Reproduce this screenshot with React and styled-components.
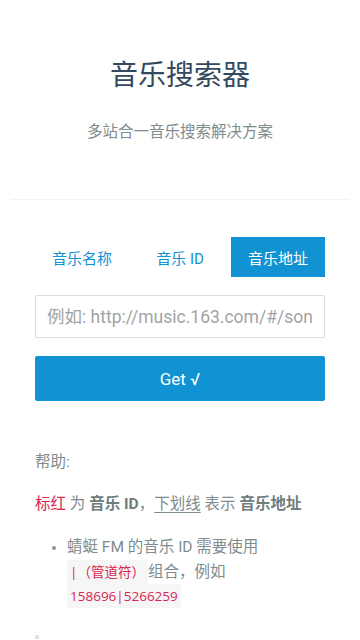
import React, { useState } from "react";
import styled, { createGlobalStyle } from "styled-components";

const GlobalStyle = createGlobalStyle`
	html, body {
		margin: 0;
		padding: 0;
		background: #fff;
	}
	body {
		font-family: Roboto, "Noto Sans CJK SC", sans-serif;
		color: #7f8c8d;
	}
`;

const tabs = ["音乐名称", "音乐 ID", "音乐地址"];

function App() {
	const [active, setActive] = useState(2);
	return (
		<Page>
			<GlobalStyle />
			<Header>
				<Title>音乐搜索器</Title>
				<Subtitle>多站合一音乐搜索解决方案</Subtitle>
			</Header>
			<Main>
				<Tabs>
					{tabs.map((t, i) => (
						<Tab key={t} $active={i === active} onClick={() => setActive(i)}>
							{t}
						</Tab>
					))}
				</Tabs>
				<Input placeholder="例如: http://music.163.com/#/song?id=25906124" />
				<SubmitButton>Get √</SubmitButton>
				<Help>
					<HelpTitle>帮助:</HelpTitle>
					<HelpLine>
						<Red>标红</Red> 为 <b>音乐 ID</b>，<Under>下划线</Under> 表示{" "}
						<b>音乐地址</b>
					</HelpLine>
					<List>
						<li>
							蜻蜓 FM 的音乐 ID 需要使用 <Code>|（管道符）</Code>组合，例如{" "}
							<Code>158696|5266259</Code>
						</li>
					</List>
					<Marker />
				</Help>
			</Main>
		</Page>
	);
}
export default App;

const Page = styled.div`
	width: 360px;
	min-height: 640px;
	overflow: hidden;
`;

const Header = styled.header`
	margin: 0 11px;
	padding: 58px 0 55px;
	text-align: center;
	border-bottom: 1px solid #f3f3f3;
`;

const Title = styled.h1`
	margin: 0;
	font-size: 28px;
	line-height: 36px;
	font-weight: 400;
	color: #34495e;
`;

const Subtitle = styled.p`
	margin: 26px 0 0;
	font-size: 15.5px;
	line-height: 24px;
	color: #7f8c8d;
`;

const Main = styled.main`
	padding: 37px 35px 0;
`;

const Tabs = styled.nav`
	display: grid;
	grid-template-columns: repeat(3, 1fr);
	gap: 4px;
`;

const Tab = styled.div`
	height: 40px;
	display: flex;
	align-items: center;
	justify-content: center;
	font-size: 15px;
	cursor: pointer;
	color: ${(p) => (p.$active ? "#fff" : "#1192d3")};
	background: ${(p) => (p.$active ? "#1192d3" : "transparent")};
`;

const Input = styled.input`
	display: block;
	box-sizing: border-box;
	width: 100%;
	height: 43px;
	margin-top: 18px;
	padding: 0 11px;
	border: 1px solid #dcdcdc;
	border-radius: 2px;
	font-family: Roboto, "Noto Sans CJK SC", sans-serif;
	font-size: 17.5px;
	color: #555;
	outline: none;
	&::placeholder {
		color: #a3a3a3;
	}
`;

const SubmitButton = styled.button`
	display: block;
	width: 100%;
	height: 45px;
	margin-top: 18px;
	border: none;
	border-radius: 2px;
	background: #1192d3;
	color: #fff;
	font-family: Roboto, "Noto Sans CJK SC", sans-serif;
	font-size: 17px;
	cursor: pointer;
`;

const Help = styled.section`
	margin-top: 49px;
	font-size: 15.5px;
	line-height: 24px;
	color: #7f8c8d;
	b {
		color: #6f7c7d;
		font-weight: 700;
	}
`;

const HelpTitle = styled.p`
	margin: 0;
`;

const HelpLine = styled.p`
	margin: 18px 0 0;
`;

const Red = styled.span`
	color: #d6264f;
`;

const Under = styled.span`
	text-decoration: underline;
	text-underline-offset: 3px;
`;

const List = styled.ul`
	margin: 19px 0 0;
	padding-left: 32px;
	li {
		line-height: 24.5px;
	}
	li::marker {
		color: #8a9597;
		font-size: 13px;
	}
`;

const Code = styled.code`
	font-family: "Open Sans", "Noto Sans CJK SC", sans-serif;
	font-size: 13.5px;
	color: #d6264f;
	background: #f6f6f6;
	padding: 3px 3px;
	border-radius: 2px;
	white-space: nowrap;
`;

const Marker = styled.div`
	width: 4px;
	height: 4px;
	margin-top: 26px;
	background: #e3e3e3;
`;
